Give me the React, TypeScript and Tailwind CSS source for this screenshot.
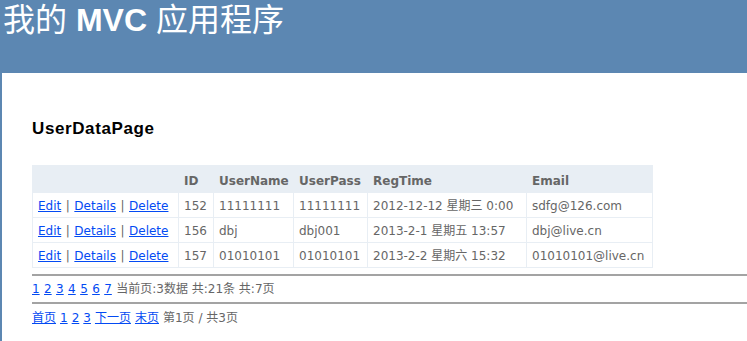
const users = [
  { id: 152, name: "11111111", pass: "11111111", reg: "2012-12-12 星期三 0:00", email: "sdfg@126.com" },
  { id: 156, name: "dbj", pass: "dbj001", reg: "2013-2-1 星期五 13:57", email: "dbj@live.cn" },
  { id: 157, name: "01010101", pass: "01010101", reg: "2013-2-2 星期六 15:32", email: "01010101@live.cn" },
];

const body = "font-['DejaVu_Sans','Noto_Sans_CJK_SC',sans-serif]";

export default function App() {
  return (
    <div className="min-h-screen bg-[#5c87b2]">
      {/* Header */}
      <div className="h-[73px]">
        <h1 className="pl-[3px] pt-[2px] text-[32px] leading-[36px] text-white font-['Liberation_Sans','Noto_Sans_CJK_SC',sans-serif]">
          <span className="font-normal">我的 </span>
          <span className="font-bold">MVC</span>
          <span className="font-normal"> 应用程序</span>
        </h1>
      </div>

      {/* Main */}
      <div className={`ml-[2px] bg-white min-h-[268px] pl-[30px] pt-[46px] text-[12px] text-[#666666] ${body}`}>
        <h2 className="mb-[26px] text-[17px] leading-[20px] font-bold tracking-[0.6px] text-black font-['Liberation_Sans',sans-serif]">
          UserDataPage
        </h2>

        <table className="w-[620px] table-fixed border-collapse border border-[#e8eef4] text-left">
          <thead>
            <tr className="h-[27px] bg-[#e8eef4]">
              <th className="w-[146px] border border-[#e8eef4]"></th>
              <th className="w-[35px] border border-[#e8eef4] px-[5px] pt-[3px] font-bold">ID</th>
              <th className="w-[80px] border border-[#e8eef4] px-[5px] pt-[3px] font-bold">UserName</th>
              <th className="w-[74px] border border-[#e8eef4] px-[5px] pt-[3px] font-bold">UserPass</th>
              <th className="w-[159px] border border-[#e8eef4] px-[5px] pt-[3px] font-bold">RegTime</th>
              <th className="w-[126px] border border-[#e8eef4] px-[5px] pt-[3px] font-bold">Email</th>
            </tr>
          </thead>
          <tbody>
            {users.map((u) => (
              <tr key={u.id} className="h-[25px]">
                <td className="border border-[#e8eef4] px-[5px] pt-[2px] whitespace-nowrap">
                  <a href="#" className="text-[#034af3] underline">Edit</a>{" "}
                  <span className="px-[0.7px]">|</span>{" "}
                  <a href="#" className="text-[#034af3] underline">Details</a>{" "}
                  <span className="px-[0.7px]">|</span>{" "}
                  <a href="#" className="text-[#034af3] underline">Delete</a>
                </td>
                <td className="border border-[#e8eef4] px-[5px] pt-[2px]">{u.id}</td>
                <td className="border border-[#e8eef4] px-[5px] pt-[2px]">{u.name}</td>
                <td className="border border-[#e8eef4] px-[5px] pt-[2px]">{u.pass}</td>
                <td className="border border-[#e8eef4] px-[5px] pt-[2px] whitespace-nowrap">{u.reg}</td>
                <td className="border border-[#e8eef4] px-[5px] pt-[2px] whitespace-nowrap">{u.email}</td>
              </tr>
            ))}
          </tbody>
        </table>

        <div className="mt-[6px] border-t-2 border-[#a3a3a3]"></div>
        <div className="mt-[3px] leading-[20px] flex gap-[4.4px]">
          {[1, 2, 3, 4, 5, 6, 7].map((n) => (
            <a key={n} href="#" className="text-[#034af3] underline">{n}</a>
          ))}
          <span>当前页:3数据 共:21条 共:7页</span>
        </div>
        <div className="mt-[3px] border-t-2 border-[#a3a3a3]"></div>
        <div className="mt-[4px] leading-[20px] flex gap-[4px]">
          <a href="#" className="text-[#034af3] underline">首页</a>
          <a href="#" className="text-[#034af3] underline">1</a>
          <a href="#" className="text-[#034af3] underline">2</a>
          <a href="#" className="text-[#034af3] underline">3</a>
          <a href="#" className="text-[#034af3] underline">下一页</a>
          <a href="#" className="text-[#034af3] underline">末页</a>
          <span>第1页 / 共3页</span>
        </div>
      </div>
    </div>
  );
}
